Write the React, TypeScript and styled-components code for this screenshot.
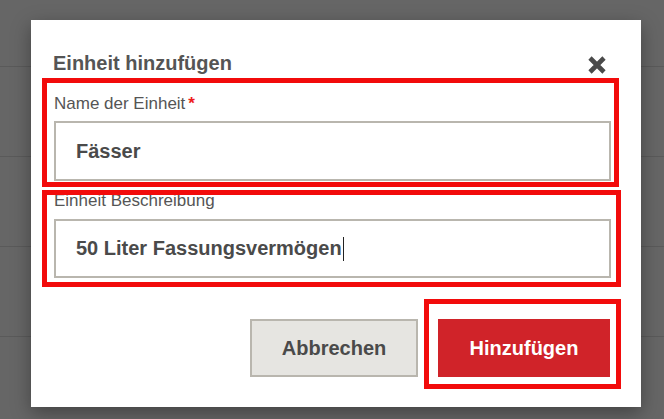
import styled, { createGlobalStyle } from 'styled-components';

const GlobalStyle = createGlobalStyle`
  html, body {
    margin: 0;
    padding: 0;
    background: #666666;
    font-family: 'Liberation Sans', Arial, sans-serif;
  }
`;

const Page = styled.div`
  position: relative;
  width: 664px;
  height: 419px;
  overflow: hidden;
  background: #666666;
`;

const Backdrop = styled.div`
  display: flex;
  flex-direction: column;
  padding-top: 66px;
`;

const BackRow = styled.div`
  height: 89px;
  border-top: 1px solid #5a5a5a;
`;

const Modal = styled.div`
  position: absolute;
  left: 31px;
  top: 20px;
  width: 610px;
  height: 387px;
  box-sizing: border-box;
  background: #ffffff;
  padding: 31px 20px 18px 11px;
  display: flex;
  flex-direction: column;
  box-shadow: 0 6px 18px rgba(0, 0, 0, 0.35);
`;

const Header = styled.div`
  display: flex;
  align-items: center;
  justify-content: space-between;
  height: 24px;
  margin-bottom: 3px;
  padding-left: 11px;
`;

const Title = styled.h2`
  margin: 0;
  font-size: 20px;
  line-height: 24px;
  font-weight: 700;
  color: #555555;
`;

const CloseButton = styled.button`
  border: 0;
  background: none;
  padding: 0;
  margin: 4px 15px 0 0;
  width: 18px;
  height: 18px;
  display: flex;
  cursor: pointer;
`;

// red annotation frame, drawn over its content
const Highlight = styled.div<{ $pad: string; $right?: number; $top?: number }>`
  position: relative;
  padding: ${(p) => p.$pad};
  margin-right: ${(p) => p.$right ?? 0}px;
  margin-top: ${(p) => p.$top ?? 0}px;

  &::after {
    content: '';
    position: absolute;
    inset: 0;
    border: 5px solid #f20b0b;
    pointer-events: none;
  }
`;

const Field = styled.div<{ $gap: number }>`
  display: flex;
  flex-direction: column;
  gap: ${(p) => p.$gap}px;
`;

const Label = styled.label<{ $shift?: number }>`
  font-size: 17px;
  line-height: 20px;
  color: #555555;
  margin-top: ${(p) => p.$shift ?? 0}px;
`;

const Required = styled.span`
  color: #ee1c1c;
  font-weight: 700;
  margin-left: 3px;
`;

const InputBox = styled.div<{ $h: number }>`
  height: ${(p) => p.$h}px;
  box-sizing: border-box;
  border: 2px solid #b9b6ae;
  padding: 0 20px;
  display: flex;
  align-items: center;
  font-size: 20px;
  font-weight: 700;
  color: #4a4a4a;
`;

const Caret = styled.span`
  display: inline-block;
  width: 1px;
  height: 24px;
  background: #222;
  margin-left: 1px;
`;

const Footer = styled.div`
  margin-top: 12px;
  display: flex;
  justify-content: flex-end;
  align-items: flex-end;
  gap: 6px;
`;

const Button = styled.button<{ $primary?: boolean }>`
  height: 58px;
  box-sizing: border-box;
  font-family: 'Liberation Sans', Arial, sans-serif;
  font-size: 20px;
  font-weight: 700;
  cursor: pointer;
  border: 2px solid ${(p) => (p.$primary ? '#d02329' : '#b9b6ae')};
  background: ${(p) => (p.$primary ? '#d02329' : '#e6e5e1')};
  color: ${(p) => (p.$primary ? '#ffffff' : '#4a4a4a')};
  width: ${(p) => (p.$primary ? 172 : 168)}px;
  margin-bottom: ${(p) => (p.$primary ? 0 : 12)}px;
`;

const CloseIcon = () => (
  <svg width="18" height="18" viewBox="0 0 18 18">
    <path d="M2 2 L16 16 M16 2 L2 16" stroke="#4a4a4a" strokeWidth="4.6" strokeLinecap="butt" />
  </svg>
);

export default function App() {
  return (
    <>
      <GlobalStyle />
      <Page>
        <Backdrop>
          <BackRow />
          <BackRow />
          <BackRow />
          <BackRow />
        </Backdrop>
        <Modal>
          <Header>
            <Title>Einheit hinzufügen</Title>
            <CloseButton aria-label="Schließen">
              <CloseIcon />
            </CloseButton>
          </Header>

          <Highlight $pad="16px 8px 6px 12px" $right={2}>
            <Field $gap={7}>
              <Label>
                Name der Einheit<Required>*</Required>
              </Label>
              <InputBox $h={60}>Fässer</InputBox>
            </Field>
          </Highlight>

          <Highlight $pad="0 10px 9px 12px" $top={3}>
            <Field $gap={8}>
              <Label $shift={1}>Einheit Beschreibung</Label>
              <InputBox $h={59}>
                50 Liter Fassungsvermögen
                <Caret />
              </InputBox>
            </Field>
          </Highlight>

          <Footer>
            <Button>Abbrechen</Button>
            <Highlight $pad="20px 11px 12px 14px">
              <Button $primary>Hinzufügen</Button>
            </Highlight>
          </Footer>
        </Modal>
      </Page>
    </>
  );
}
